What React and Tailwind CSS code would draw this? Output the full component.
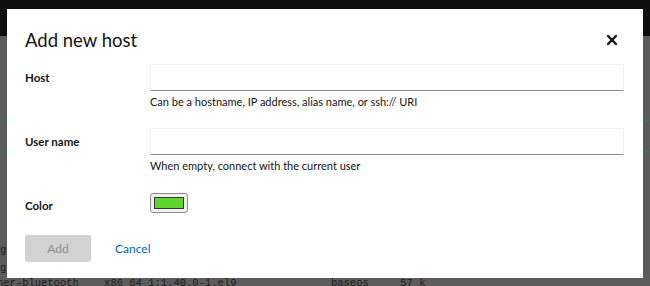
import { X } from 'lucide-react';

const mono = { fontFamily: '"Liberation Mono", "DejaVu Sans Mono", monospace' };

/**
 * Background page, dimmed under the modal backdrop
 */
function BackgroundPage() {
    return (
        <div className="w-[650px] h-[286px] flex flex-col bg-[#5c5c5c]">
            <div className="h-[36px] shrink-0 bg-[#0e0e0e]" />
            <div className="flex flex-col text-[10.5px] leading-[18px] text-[#1c1c1c] whitespace-pre" style={mono}>
                <div className="h-[84px] shrink-0" />
                <div className="h-px shrink-0 bg-[#3f6f68]" />
                <div className="h-[30px] shrink-0" />
                <div className="h-px shrink-0 bg-[#3f6f68]" />
                <div className="h-[89px] shrink-0" />
                <span className="shrink-0">ge</span>
                <span className="shrink-0">ge</span>
                <span className="shrink-0 -ml-[3px] -mt-[3px]">{'ner-bluetooth    x86_64 1:1.40.0-1.el9               baseos     57 k'}</span>
            </div>
        </div>
    );
}

/**
 * Form row with a label on the left and a field on the right
 */
function FormRow({ label, children }) {
    return (
        <div className="flex">
            <div className="w-[125px] shrink-0 pt-[5px] text-[11.5px] leading-[18px] font-bold text-[#151515]">{label}</div>
            <div className="flex-1">{children}</div>
        </div>
    );
}

function TextField({ helper }) {
    return (
        <div>
            <input
                type="text"
                className="block w-full h-[27px] border border-[#f0f0f0] border-b-[#8a8d90] outline-none px-2 text-[11px]"
            />
            <p className="mt-[2px] text-[11px] leading-[18px] text-[#151515]">{helper}</p>
        </div>
    );
}

export default function App() {
    return (
        <div className="relative w-[650px] h-[286px] overflow-hidden" style={{ fontFamily: 'Lato, "Open Sans", "Liberation Sans", sans-serif' }}>
            <BackgroundPage />

            <div className="absolute left-[7px] top-[9px] w-[636px] h-[269px] bg-white pl-[18px] pr-[18px] pt-[17px]">
                <div className="flex items-center justify-between">
                    <h1 className="text-[18.5px] leading-[28px] text-[#151515]">Add new host</h1>
                    <button className="mr-[5px] text-[#151515]">
                        <X size={16} strokeWidth={3.6} />
                    </button>
                </div>

                <div className="mt-[10px] mr-[1px] flex flex-col gap-[17px]">
                    <FormRow label="Host">
                        <TextField helper="Can be a hostname, IP address, alias name, or ssh:// URI" />
                    </FormRow>
                    <FormRow label="User name">
                        <TextField helper="When empty, connect with the current user" />
                    </FormRow>
                    <FormRow label="Color">
                        <div className="pt-[1px]">
                            <div className="w-[38px] h-[20px] rounded-[3px] border border-[#8a8d90] bg-[#f0f0f0] p-[3px]">
                                <div className="w-full h-full bg-[#5fd42a] border border-[#3a3a3a]" />
                            </div>
                        </div>
                    </FormRow>
                </div>

                <div className="mt-[20px] flex items-center gap-[24px]">
                    <button className="w-[66px] h-[27px] rounded-[3px] bg-[#d2d2d2] text-[12px] text-[#8a8d90]">Add</button>
                    <button className="text-[12px] text-[#0066cc]">Cancel</button>
                </div>
            </div>
        </div>
    );
}
